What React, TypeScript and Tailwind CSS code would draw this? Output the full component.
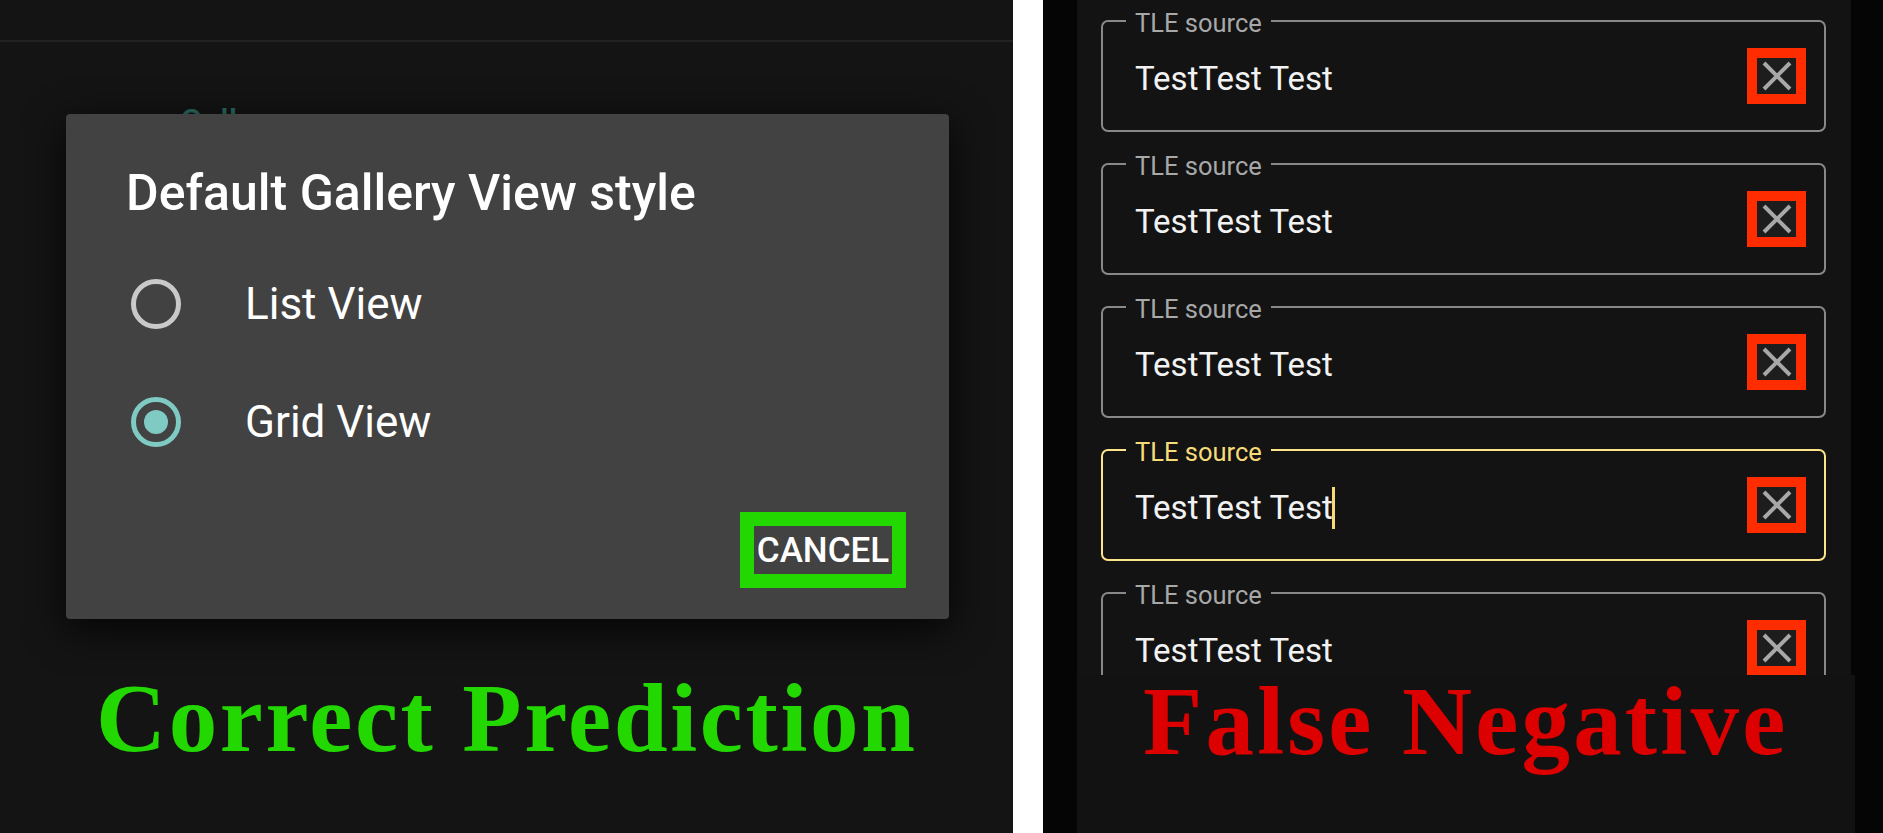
import React from 'react'

const roboto = { fontFamily: 'Roboto, "Noto Sans", sans-serif' }
const serif = { fontFamily: '"Liberation Serif", "DejaVu Serif", serif' }

function ClearIcon() {
  return (
    <svg width="30" height="30" viewBox="0 0 30 30" fill="none">
      <path d="M2 2 L28 28 M28 2 L2 28" stroke="#a8a8a8" strokeWidth="4" />
    </svg>
  )
}

function TleField({ focused = false }: { focused?: boolean }) {
  return (
    <div
      className={`relative h-[112px] shrink-0 rounded-[7px] border-2 flex items-center justify-between pl-[32px] pr-[18px] ${
        focused ? 'border-[#fbe48a]' : 'border-[#888888]'
      }`}
    >
      {/* label sits in the notch of the outline */}
      <span
        className={`absolute left-[23px] -top-[11px] bg-[#131313] px-[9px] text-[25.5px] leading-none ${
          focused ? 'text-[#f6dc78]' : 'text-[#a8a8a8]'
        }`}
      >
        TLE source
      </span>
      <div className="flex items-center mt-[5px]">
        <span className="text-[33px] leading-none text-[#f2f2f2]">TestTest Test</span>
        {focused && <span className="-ml-[1px] w-[3px] h-[42px] bg-[#f6dc78]" />}
      </div>
      <div className="w-[59px] h-[56px] border-[10px] border-[#ff2c00] bg-[#1d1d1d] flex items-center justify-center">
        <ClearIcon />
      </div>
    </div>
  )
}

function Radio({ checked }: { checked?: boolean }) {
  return (
    <div
      className={`w-[50px] h-[50px] rounded-full border-[5px] flex items-center justify-center shrink-0 ${
        checked ? 'border-[#7fcbc4]' : 'border-[#c9c9c9]'
      }`}
    >
      {checked && <div className="w-[24px] h-[24px] rounded-full bg-[#7fcbc4]" />}
    </div>
  )
}

export default function App() {
  return (
    <div className="w-[1883px] h-[833px] flex overflow-hidden bg-[#121212]" style={roboto}>
      {/* Left: settings screen with dialog */}
      <div className="w-[1013px] shrink-0 flex flex-col bg-[#141414]">
        <div className="h-[42px] shrink-0 border-b-2 border-[#222222]" />
        <div className="relative h-[628px] shrink-0">
          <div className="pl-[180px] pt-[63px] text-[33px] font-medium leading-none text-[#2d6b63]">Gallery</div>

          {/* Dialog */}
          <div className="absolute left-[66px] top-[72px] w-[883px] h-[505px] rounded-[4px] bg-[#424242] shadow-[0_10px_40px_rgba(0,0,0,0.8)] flex flex-col">
            <h2 className="pl-[60px] pt-[54px] text-[50px] font-medium leading-none text-white">
              Default Gallery View style
            </h2>
            <div className="mt-[27px] flex flex-col">
              <div className="h-[118px] flex items-center pl-[65px] gap-[64px]">
                <Radio />
                <span className="text-[44px] leading-none text-white">List View</span>
              </div>
              <div className="h-[118px] flex items-center pl-[65px] gap-[64px]">
                <Radio checked />
                <span className="text-[44px] leading-none text-white">Grid View</span>
              </div>
            </div>
            <div className="mt-[31px] flex justify-end pr-[43px]">
              <div className="w-[166px] h-[76px] border-[14px] border-[#22d800] flex items-center justify-center">
                <span className="text-[35px] font-medium leading-none text-white">CANCEL</span>
              </div>
            </div>
          </div>
        </div>
        <div
          className="pl-[96px] text-[97px] font-bold leading-none text-[#22d800] tracking-[2.6px]"
          style={serif}
        >
          Correct Prediction
        </div>
      </div>

      {/* Divider */}
      <div className="w-[30px] shrink-0 bg-white" />

      {/* Right: TLE source list */}
      <div className="flex-1 flex flex-col bg-[#050505]">
        <div className="h-[675px] shrink-0 flex">
          <div className="w-[34px] shrink-0" />
          <div className="w-[774px] shrink-0 bg-[#131313] overflow-hidden pt-[20px] pl-[24px] pr-[25px] flex flex-col gap-[31px]">
            <TleField />
            <TleField />
            <TleField />
            <TleField focused />
            <TleField />
          </div>
        </div>
        <div className="flex-1 flex">
          <div className="w-[34px] shrink-0" />
          <div className="w-[778px] shrink-0 bg-[#121212] pl-[66px]">
            <div
              className="text-[97px] font-bold leading-[93px] text-[#dd0000] tracking-[3.2px]"
              style={serif}
            >
              False Negative
            </div>
          </div>
        </div>
      </div>
    </div>
  )
}
